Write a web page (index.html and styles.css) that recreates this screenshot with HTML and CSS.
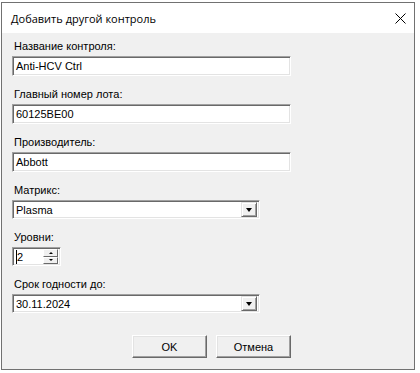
FILE: index.html
```html
<!DOCTYPE html>
<html lang="ru">
<head>
  <meta charset="UTF-8">
  <title>Добавить другой контроль</title>
  <link rel="stylesheet" href="styles.css">
</head>
<body>
  <div class="dialog">
    <div class="title-bar">
      <span class="title">Добавить другой контроль</span>
      <svg class="close" width="11" height="11" viewBox="0 0 11 11">
        <path d="M0.5 0.5 L10.5 10.5 M10.5 0.5 L0.5 10.5" stroke="#000" stroke-width="1"/>
      </svg>
    </div>

    <form class="client">
      <div class="field">
        <label>Название контроля:</label>
        <div class="edit wide">Anti-HCV Ctrl</div>
      </div>
      <div class="field">
        <label>Главный номер лота:</label>
        <div class="edit wide">60125BE00</div>
      </div>
      <div class="field">
        <label>Производитель:</label>
        <div class="edit wide">Abbott</div>
      </div>
      <div class="field">
        <label>Матрикс:</label>
        <div class="edit combo">
          <span class="value">Plasma</span>
          <span class="drop"><i class="arrow"></i></span>
        </div>
      </div>
      <div class="field">
        <label>Уровни:</label>
        <div class="edit spin">
          <span class="value"><i class="caret"></i>2</span>
          <span class="spin-btns">
            <span class="spin-btn"><i class="up"></i></span>
            <span class="spin-btn"><i class="down"></i></span>
          </span>
        </div>
      </div>
      <div class="field">
        <label>Срок годности до:</label>
        <div class="edit combo">
          <span class="value">30.11.2024</span>
          <span class="drop"><i class="arrow"></i></span>
        </div>
      </div>

      <div class="buttons">
        <button type="button">OK</button>
        <button type="button">Отмена</button>
      </div>
    </form>
  </div>
</body>
</html>
```

FILE: styles.css
```css
body {
  margin: 0;
  background-color: #fff;
  font-family: "Liberation Sans", Arial, sans-serif;
  font-size: 11px;
  color: #000;
}
.dialog {
  width: 412px;
  height: 366px;
  margin: 2px 0 0 1px;
  border: 1px solid #717171;
  background-color: #f0f0f0;
  display: flex;
  flex-direction: column;
}
.title-bar {
  height: 30px;
  background-color: #fff;
  display: flex;
  align-items: center;
  justify-content: space-between;
  padding: 0 6px 0 9px;
}
.title {
  font-family: "Open Sans", "Noto Sans", sans-serif;
  font-size: 11px;
}
.close {
  margin-right: 2px;
}
.client {
  padding: 7px 0 0 10px;
  margin: 0;
}
.field {
  margin-bottom: 12px;
}
.field label {
  display: block;
  height: 13px;
  line-height: 13px;
  margin-bottom: 3px;
  padding-left: 2px;
}
/* sunken 3D edit box */
.edit {
  box-sizing: border-box;
  height: 20px;
  border: 1px solid;
  border-color: #a0a0a0 #fff #fff #a0a0a0;
  box-shadow: inset 1px 1px 0 #696969, inset -1px -1px 0 #e3e3e3;
  background-color: #fff;
  padding: 0 0 0 3px;
  line-height: 18px;
  display: flex;
  align-items: center;
}
.wide {
  width: 279px;
}
.combo {
  width: 248px;
  height: 19px;
  padding-right: 2px;
}
.value {
  flex: 1;
  display: flex;
  align-items: center;
}
.drop {
  width: 16px;
  height: 15px;
  box-sizing: border-box;
  background-color: #f0f0f0;
  border: 1px solid;
  border-color: #e3e3e3 #696969 #696969 #e3e3e3;
  box-shadow: inset 1px 1px 0 #fff, inset -1px -1px 0 #a0a0a0;
  display: flex;
  align-items: center;
  justify-content: center;
}
.arrow {
  width: 0;
  height: 0;
  border-left: 3.5px solid transparent;
  border-right: 3.5px solid transparent;
  border-top: 4px solid #000;
}
.spin {
  width: 49px;
  height: 19px;
  padding-right: 2px;
}
.caret {
  display: inline-block;
  width: 1px;
  height: 14px;
  background-color: #000;
}
.spin-btns {
  display: flex;
  flex-direction: column;
  width: 15px;
}
.spin-btn {
  height: 7.5px;
  box-sizing: border-box;
  background-color: #f0f0f0;
  border: 1px solid;
  border-color: #fff #696969 #696969 #fff;
  display: flex;
  align-items: center;
  justify-content: center;
}
.up {
  width: 0;
  height: 0;
  border-left: 2px solid transparent;
  border-right: 2px solid transparent;
  border-bottom: 2px solid #000;
}
.down {
  width: 0;
  height: 0;
  border-left: 2px solid transparent;
  border-right: 2px solid transparent;
  border-top: 2px solid #000;
}
.buttons {
  width: 279px;
  display: flex;
  justify-content: flex-end;
  gap: 9px;
  margin-top: 22px;
}
button {
  width: 75px;
  height: 23px;
  font-family: "Liberation Sans", Arial, sans-serif;
  font-size: 11px;
  color: #000;
  background-color: #f0f0f0;
  border: 1px solid;
  border-color: #fff #696969 #696969 #fff;
  box-shadow: inset -1px -1px 0 #a0a0a0, inset 1px 1px 0 #e3e3e3;
  padding: 0;
}
```
